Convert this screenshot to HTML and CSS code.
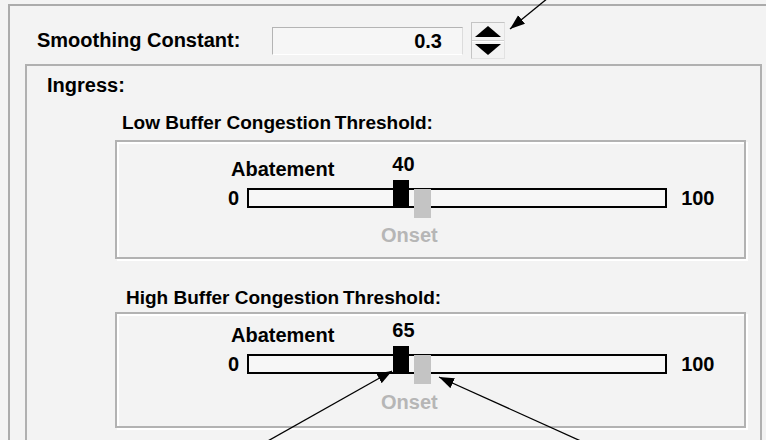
FILE: index.html
```html
<!DOCTYPE html>
<html lang="en">
<head>
    <meta charset="UTF-8">
    <meta name="viewport" content="width=device-width, initial-scale=1.0">
    <title>Congestion Thresholds</title>
    <link rel="stylesheet" href="styles.css">
</head>
<body>
    <div class="panel">
        <div class="smooth-row">
            <span class="smooth-label">Smoothing Constant:</span>
            <div class="num-field">0.3</div>
            <div class="spinner">
                <div class="spin-btn">
                    <svg width="26" height="11" viewBox="0 0 26 11"><polygon points="13,0 26,11 0,11" fill="#000"/></svg>
                </div>
                <div class="spin-btn">
                    <svg width="26" height="11" viewBox="0 0 26 11"><polygon points="0,0 26,0 13,11" fill="#000"/></svg>
                </div>
            </div>
        </div>

        <div class="ingress">
            <div class="ingress-title">Ingress:</div>

            <!-- low threshold -->
            <div class="group group-low">
                <div class="group-title">Low Buffer Congestion&#8201;Threshold:</div>
                <div class="etched">
                    <div class="slider-top">
                        <span class="abate">Abatement</span>
                        <span class="value">40</span>
                    </div>
                    <div class="slider-row">
                        <span class="end-min">0</span>
                        <div class="track">
                            <span class="thumb thumb-abate"></span>
                            <span class="thumb thumb-onset"></span>
                        </div>
                        <span class="end-max">100</span>
                    </div>
                    <div class="onset">Onset</div>
                </div>
            </div>

            <!-- high threshold -->
            <div class="group group-high">
                <div class="group-title">High Buffer Congestion&#8201;Threshold:</div>
                <div class="etched">
                    <div class="slider-top">
                        <span class="abate">Abatement</span>
                        <span class="value">65</span>
                    </div>
                    <div class="slider-row">
                        <span class="end-min">0</span>
                        <div class="track">
                            <span class="thumb thumb-abate"></span>
                            <span class="thumb thumb-onset"></span>
                        </div>
                        <span class="end-max">100</span>
                    </div>
                    <div class="onset">Onset</div>
                </div>
            </div>
        </div>
    </div>

    <!-- callout arrows drawn over the screenshot -->
    <svg class="callouts" width="766" height="440" viewBox="0 0 766 440">
        <defs>
            <marker id="head" markerUnits="userSpaceOnUse" markerWidth="16" markerHeight="12" refX="15" refY="5.5" orient="auto">
                <path d="M0,0 L15,5.5 L0,11 z" fill="#000"/>
            </marker>
        </defs>
        <line x1="548" y1="-2" x2="510" y2="29" stroke="#000" stroke-width="1.3" marker-end="url(#head)"/>
        <line x1="266" y1="442" x2="392" y2="371" stroke="#000" stroke-width="1.3" marker-end="url(#head)"/>
        <line x1="583" y1="442" x2="439" y2="377" stroke="#000" stroke-width="1.3" marker-end="url(#head)"/>
    </svg>
</body>
</html>
```

FILE: styles.css
```css
body {
    margin: 0;
    background-color: #f3f3f3;
    font-family: "Liberation Sans", Arial, sans-serif;
    font-weight: bold;
    font-size: 20px;
    line-height: 23px;
    color: #000;
    overflow: hidden;
    position: relative;
    height: 440px;
}
.panel {
    margin: 4px -40px 0 8px;
    border-top: 2px solid #ababab;
    border-left: 2px solid #ababab;
    height: 480px;
}
.smooth-row {
    display: flex;
    align-items: center;
    margin-top: 16px;
    padding-left: 27px;
    height: 37px;
}
.smooth-label {
    width: 235px;
}
.num-field {
    box-sizing: border-box;
    width: 191px;
    height: 28px;
    border-top: 1px solid #b4b4b4;
    border-left: 1px solid #b4b4b4;
    border-right: 1px solid #dcdcdc;
    border-bottom: 1px solid #fff;
    background-color: #f6f6f6;
    text-align: right;
    padding-right: 20px;
    line-height: 26px;
}
.spinner {
    box-sizing: border-box;
    margin-left: 8px;
    width: 34px;
    height: 37px;
    display: flex;
    flex-direction: column;
    border-top: 1px solid #c4c4c4;
    border-left: 1px solid #c4c4c4;
    border-right: 1px solid #e2e2e2;
    border-bottom: 1px solid #e2e2e2;
}
.spin-btn {
    flex: 1;
    display: flex;
    align-items: center;
    justify-content: center;
    border-bottom: 1px solid #d0d0d0;
}
.spin-btn:last-child {
    border-top: 1px solid #fff;
    border-bottom: none;
}
.ingress {
    box-sizing: border-box;
    margin: 5px 0 0 15px;
    width: 737px;
    height: 420px;
    border: 2px solid #b0b0b0;
    border-bottom: none;
    padding: 8px 0 0 20px;
}
.group-title {
    padding-left: 75px;
    font-size: 19px;
}
.group-low {
    margin-top: 14px;
}
.group-high {
    margin-top: 27px;
}
.group-high .group-title {
    padding-left: 79px;
}
.etched {
    box-sizing: border-box;
    margin: 6px 0 0 68px;
    width: 631px;
    border: 2px solid #b2b2b2;
    box-shadow: inset 2px 2px #fff, 2px 2px #fff;
    padding: 11px 0 10px 0;
}
.group-high .etched {
    margin-top: 3px;
    padding-top: 5px;
    padding-bottom: 12px;
}
.slider-top {
    display: flex;
    align-items: flex-start;
    padding-left: 114px;
    height: 28px;
}
.abate {
    margin-top: 5px;
}
.value {
    margin-left: 58px;
}
.slider-row {
    display: flex;
    align-items: center;
    padding-left: 111px;
    margin-top: 7px;
    height: 20px;
}
.end-min {
    margin-right: 8px;
}
.end-max {
    margin-left: 14px;
}
.track {
    box-sizing: border-box;
    position: relative;
    width: 420px;
    height: 20px;
    border: 2px solid #000;
    background-color: #f7f7f7;
}
.thumb {
    position: absolute;
}
.thumb-abate {
    left: 144px;
    top: -10px;
    width: 16px;
    height: 26px;
    background-color: #000;
}
.thumb-onset {
    left: 165px;
    top: -1px;
    width: 17px;
    height: 29px;
    background-color: #c4c4c4;
}
.onset {
    margin-top: 16px;
    padding-left: 264px;
    color: #b6b6b6;
}
.group-high .onset {
    margin-top: 17px;
}
.callouts {
    position: absolute;
    top: 0;
    left: 0;
    pointer-events: none;
}
```
